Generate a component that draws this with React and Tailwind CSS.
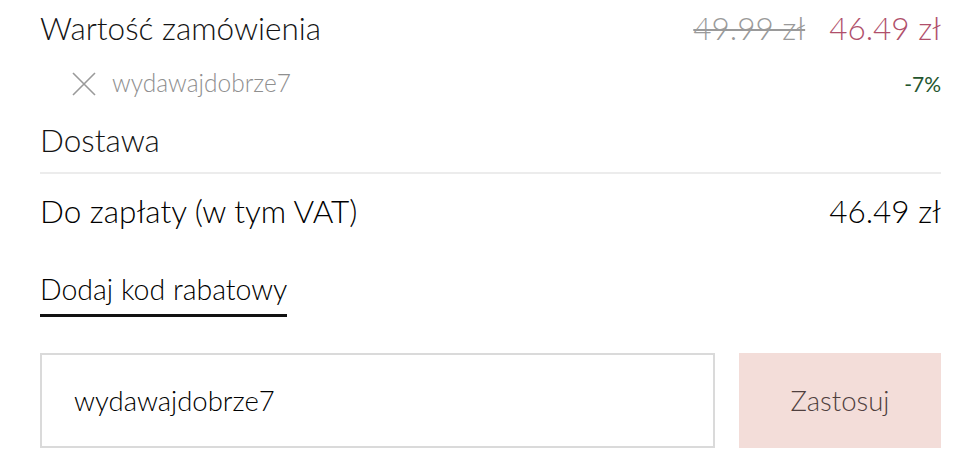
import React from "react";

export default function App() {
  return (
    <div className="w-[978px] h-[470px] bg-white overflow-hidden pl-[40px] pr-[37px] text-[#141414] font-light" style={{ fontFamily: "Lato, 'Open Sans', sans-serif" }}>
      <div className="flex items-center justify-between h-[58px]">
        <span className="text-[31.5px]">Wartość zamówienia</span>
        <div className="flex items-center gap-[24px] text-[31.5px]">
          <span className="text-[#9a9a9a] line-through decoration-[2px]">49.99 zł</span>
          <span className="text-[#b04f6b]">46.49 zł</span>
        </div>
      </div>
      <div className="flex items-center justify-between h-[51px] pl-[32px]">
        <div className="flex items-center gap-[16px]">
          <svg width="24" height="24" viewBox="0 0 24 24" fill="none" stroke="#9a9a9a" strokeWidth="1.6">
            <path d="M1 1L23 23M23 1L1 23" />
          </svg>
          <span className="text-[24.5px] text-[#8f8f8f]">wydawajdobrze7</span>
        </div>
        <span className="text-[21px] text-[#24552d] font-normal">-7%</span>
      </div>
      <div className="h-[63px] flex items-center text-[31.5px]">Dostawa</div>
      <div className="h-[2px] bg-[#ececec]" />
      <div className="h-[76px] flex items-center justify-between text-[31.5px] text-black">
        <span>Do zapłaty (w tym VAT)</span>
        <span>46.49 zł</span>
      </div>
      <div className="mt-[22px]">
        <span className="inline-block text-[28.5px] leading-[34px] pb-[8px] border-b-[3px] border-[#111] text-black">Dodaj kod rabatowy</span>
      </div>
      <div className="flex gap-[24px] mt-[36px]">
        <div className="flex-1 h-[95px] border-2 border-[#dadada] flex items-center pl-[32px] text-[27.5px] text-black">wydawajdobrze7</div>
        <div className="w-[202px] h-[95px] bg-[#f3ddd9] flex items-center justify-center text-[27.5px] text-[#4f3f3e]">Zastosuj</div>
      </div>
    </div>
  );
}
